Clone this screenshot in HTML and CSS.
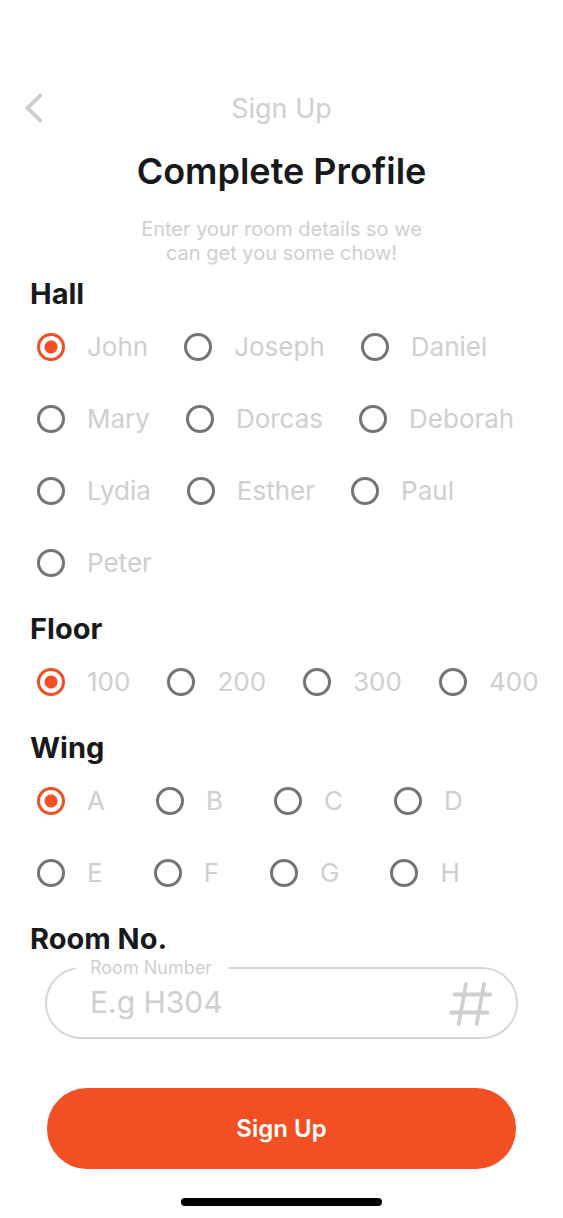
FILE: index.html
```html
<!DOCTYPE html>
<html lang="en">
<head>
<meta charset="utf-8">
<meta name="viewport" content="width=device-width, initial-scale=1">
<title>Sign Up</title>
<link rel="stylesheet" href="styles.css">
</head>
<body>
<header class="topbar">
  <button class="back" type="button" aria-label="Back">
    <svg width="20" height="30" viewBox="0 0 20 30" fill="none" stroke="currentColor" stroke-width="4"><path d="M17.500 1.400 3.500 15l14 13.600"/></svg>
  </button>
  <span class="topbar-title">Sign Up</span>
</header>
<main>
  <h1 class="title">Complete Profile</h1>
  <p class="subtitle">Enter your room details so we<br>can get you some chow!</p>
  <form class="form">
    <h2 class="heading" id="hall">Hall</h2>
    <div class="group" role="radiogroup" aria-labelledby="hall">
      <div class="row">
        <label class="option"><input type="radio" name="hall" checked>John</label>
        <label class="option"><input type="radio" name="hall">Joseph</label>
        <label class="option"><input type="radio" name="hall">Daniel</label>
      </div>
      <div class="row">
        <label class="option"><input type="radio" name="hall">Mary</label>
        <label class="option"><input type="radio" name="hall">Dorcas</label>
        <label class="option"><input type="radio" name="hall">Deborah</label>
      </div>
      <div class="row">
        <label class="option"><input type="radio" name="hall">Lydia</label>
        <label class="option"><input type="radio" name="hall">Esther</label>
        <label class="option"><input type="radio" name="hall">Paul</label>
      </div>
      <div class="row">
        <label class="option"><input type="radio" name="hall">Peter</label>
      </div>
    </div>
    <h2 class="heading" id="floor">Floor</h2>
    <div class="group" role="radiogroup" aria-labelledby="floor">
      <div class="row row-medium">
        <label class="option"><input type="radio" name="floor" checked>100</label>
        <label class="option"><input type="radio" name="floor">200</label>
        <label class="option"><input type="radio" name="floor">300</label>
        <label class="option"><input type="radio" name="floor">400</label>
      </div>
    </div>
    <h2 class="heading" id="wing">Wing</h2>
    <div class="group" role="radiogroup" aria-labelledby="wing">
      <div class="row row-wide">
        <label class="option"><input type="radio" name="wing" checked>A</label>
        <label class="option"><input type="radio" name="wing">B</label>
        <label class="option"><input type="radio" name="wing">C</label>
        <label class="option"><input type="radio" name="wing">D</label>
      </div>
      <div class="row row-wide">
        <label class="option"><input type="radio" name="wing">E</label>
        <label class="option"><input type="radio" name="wing">F</label>
        <label class="option"><input type="radio" name="wing">G</label>
        <label class="option"><input type="radio" name="wing">H</label>
      </div>
    </div>
    <h2 class="heading">Room No.</h2>
    <fieldset class="field">
      <legend class="field-legend"><label for="room">Room Number</label></legend>
      <div class="field-body">
        <input class="field-input" id="room" type="text" placeholder="E.g H304">
        <svg class="hash" width="44" height="44" viewBox="0 0 44 44" fill="none" stroke="currentColor" stroke-width="3.8" stroke-linecap="round"><path d="M18 2 10.700 42M36 2l-7.300 40M6.500 12.500h36M3 30.500h36.500"/></svg>
      </div>
    </fieldset>
    <button class="submit" type="submit">Sign Up</button>
  </form>
</main>
<div class="home-indicator"></div>
</body>
</html>
```
FILE: styles.css
```css
* {
  box-sizing: border-box;
}

body {
  margin: 0;
  padding-top: 86px;
  background: #fff;
  color: #18191a;
  font-family: Inter, "Liberation Sans", sans-serif;
}

.topbar {
  display: grid;
  grid-template-columns: 44px 1fr 44px;
  align-items: center;
  height: 44px;
  padding: 0 12px;
  color: #cecfce;
}

.back {
  display: grid;
  place-items: center;
  height: 44px;
  padding: 0;
  border: 0;
  background: none;
  color: inherit;
}

.topbar-title {
  text-align: center;
  font-size: 27px;
}

.title {
  margin: 20px 0 0;
  text-align: center;
  font-size: 36px;
  font-weight: 600;
  line-height: 42px;
}

.subtitle {
  margin: 25px 0 0;
  text-align: center;
  color: #cecfce;
  font-size: 20px;
  line-height: 24px;
}

.heading {
  margin: 12px 30px 0;
  font-size: 29px;
  font-weight: 700;
  line-height: 35px;
}

.heading:first-child {
  margin-top: 11px;
}

.row {
  display: flex;
  gap: 14px;
  padding-left: 37px;
}

.row-medium {
  gap: 15px;
}

.row-wide {
  gap: 29px;
}

.option {
  display: flex;
  align-items: center;
  height: 72px;
  padding-bottom: 2px;
  color: #cecfce;
  font-size: 26px;
}

.option input {
  appearance: none;
  flex: none;
  width: 28px;
  height: 28px;
  margin: 2px 22px 0 0;
  border: 3px solid #747474;
  border-radius: 50%;
}

.option + .option input {
  margin-left: 22px;
}

.option input:checked {
  border-color: #f24f24;
  background: radial-gradient(circle, #f24f24 6px, transparent 7px);
}

.field {
  height: 81px;
  min-width: 0;
  margin: 2px 45px 0;
  padding: 0 24px 0 29px;
  border: 2px solid #d6d7d6;
  border-radius: 36px;
}

.field-legend {
  padding: 0 16px 0 14px;
  color: #cecfce;
  font-size: 18px;
  line-height: 20px;
}

.field-body {
  display: flex;
  align-items: center;
  height: 52px;
  padding-left: 14px;
  color: #cecfce;
}

.field-input {
  flex: 1;
  min-width: 0;
  height: 48px;
  padding: 0 0 4px;
  border: 0;
  outline: 0;
  background: none;
  color: #18191a;
  font-family: inherit;
  font-size: 30px;
}

.field-input::placeholder {
  color: #cecfce;
  opacity: 1;
}

.submit {
  display: block;
  width: calc(100% - 94px);
  height: 81px;
  margin: 49px auto 0;
  border: 0;
  border-radius: 40px;
  background: #f24f24;
  color: #fff;
  font-family: inherit;
  font-size: 24px;
  font-weight: 600;
}

.home-indicator {
  width: 201px;
  height: 8px;
  margin: 29px auto 12px;
  border-radius: 4px;
  background: #000;
}
```
